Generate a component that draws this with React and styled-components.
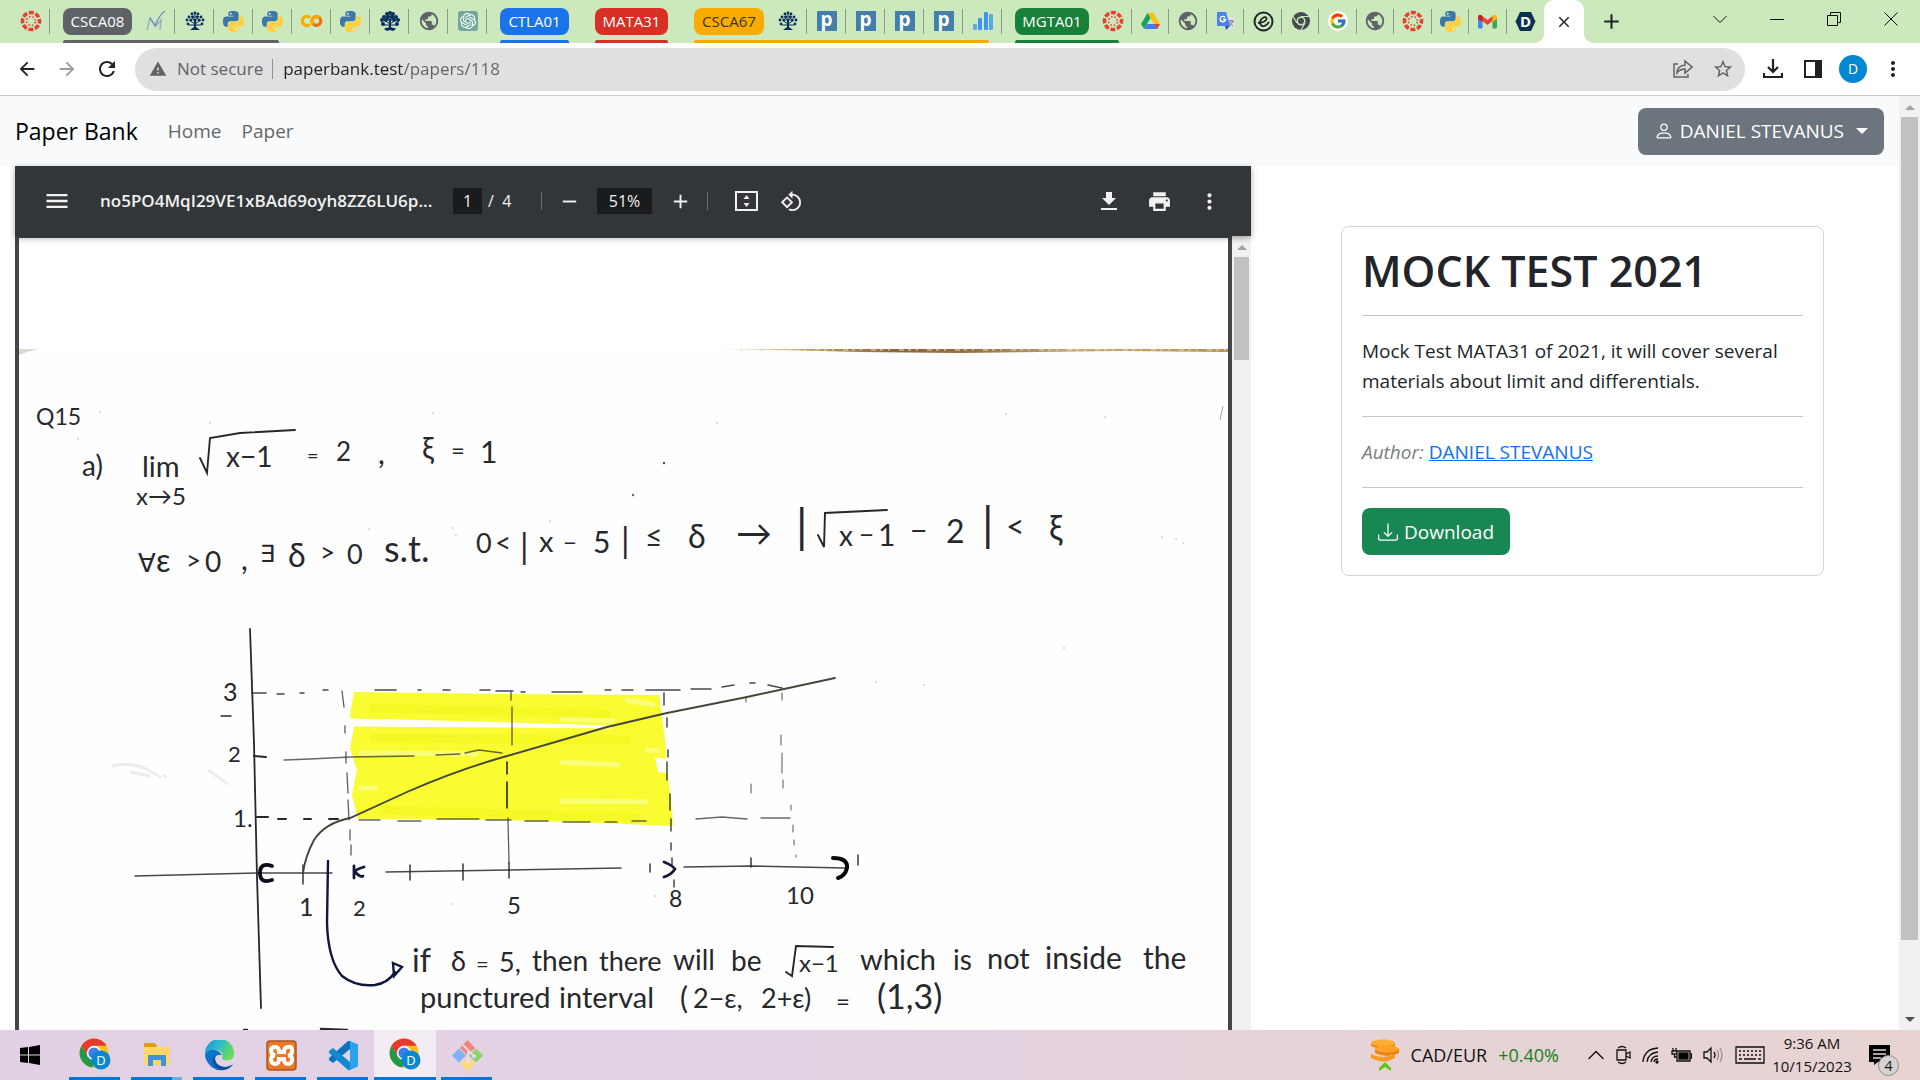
import React from "react";
import styled, { createGlobalStyle, css } from "styled-components";
import { BsPerson, BsDownload } from "react-icons/bs";
import { FcGoogle } from "react-icons/fc";
import { SiOpenai } from "react-icons/si";
import {
  MdArrowBack,
  MdArrowForward,
  MdRefresh,
  MdWarning,
  MdStarOutline,
  MdMenu,
  MdRemove,
  MdAdd,
  MdPrint,
  MdMoreVert,
  MdPublic,
  MdClose,
} from "react-icons/md";

const ink = "#26282c";

/* ---------- favicons ---------- */

const CanvasIcon = () => (
  <svg width="22" height="22" viewBox="0 0 22 22">
    <circle cx="11" cy="11" r="8.5" fill="none" stroke="#e8402f" strokeWidth="3.6" strokeDasharray="4.9 1.776" strokeDashoffset="2.4" />
    <circle cx="11" cy="11" r="4.4" fill="none" stroke="#e8402f" strokeWidth="1.6" strokeDasharray="1.5 1.956" strokeDashoffset="-1" />
  </svg>
);

const PythonIcon = () => (
  <svg width="21" height="21" viewBox="0 0 24 24">
    <path fill="#3b77a8" d="M14.25.18l.9.2.73.26.59.3.45.32.34.34.25.34.16.33.1.3.04.26.02.2-.01.13V8.5l-.05.63-.13.55-.21.46-.26.38-.3.31-.33.25-.35.19-.35.14-.33.1-.3.07-.26.04-.21.02H8.77l-.69.05-.59.14-.5.22-.41.27-.33.32-.27.35-.2.36-.15.37-.1.35-.07.32-.04.27-.02.21v3.06H3.17l-.21-.03-.28-.07-.32-.12-.35-.18-.36-.26-.36-.36-.35-.46-.32-.59-.28-.73-.21-.88-.14-1.05-.05-1.23.06-1.22.16-1.04.24-.87.32-.71.36-.57.4-.44.42-.33.42-.24.4-.16.36-.1.32-.05.24-.01h.16l.06.01h8.16v-.83H6.18l-.01-2.75-.02-.37.05-.34.11-.31.17-.28.25-.26.31-.23.38-.2.44-.18.51-.15.58-.12.64-.1.71-.06.77-.04.84-.02 1.27.05z" />
    <circle cx="8.9" cy="2.9" r="1" fill="#fff" />
    <path fill="#ffd140" d="M21.04 6.11l.28.06.32.12.35.18.36.27.36.35.35.47.32.59.28.73.21.88.14 1.04.05 1.23-.06 1.23-.16 1.04-.24.86-.32.71-.36.57-.4.45-.42.33-.42.24-.4.16-.36.09-.32.05-.24.02-.16-.01h-8.22v.82h5.84l.01 2.76.02.36-.05.34-.11.31-.17.29-.25.25-.31.24-.38.2-.44.17-.51.15-.58.13-.64.09-.71.07-.77.04-.84.01-1.27-.04-1.07-.14-.9-.2-.73-.25-.59-.3-.45-.33-.34-.34-.25-.34-.16-.33-.1-.3-.04-.25-.02-.2.01-.13v-5.34l.05-.64.13-.54.21-.46.26-.38.3-.32.33-.24.35-.2.35-.14.33-.1.3-.06.26-.04.21-.02.13-.01h5.84l.69-.05.59-.14.5-.21.41-.28.33-.32.27-.35.2-.36.15-.36.1-.35.07-.32.04-.28.02-.21V6.07h2.09l.14.01z" />
    <circle cx="15.5" cy="21.1" r="1" fill="#fff" />
  </svg>
);

const TreeIcon = ({ full }) => (
  <svg width="20" height="20" viewBox="0 0 20 20" fill="#0a2f5c">
    <path d="M9 8h2v8l4 3H5l4-3z" />
    <path d="M10 13L4 9M10 13l6-4M10 11L6 5M10 11l4-6M10 12V3M10 14H4M10 14h6" stroke="#0a2f5c" strokeWidth="1" fill="none" />
    {[[10, 2], [7, 3], [13, 3], [4, 6], [16, 6], [8, 6], [12, 6], [2, 9], [18, 9], [6, 9], [14, 9], [3, 13], [17, 13]].map(([x, y]) => (
      <circle key={`${x}-${y}`} cx={x} cy={y} r={full ? 2 : 1.4} />
    ))}
    {full && <path d="M4 18q2-2 5-1h2q3-1 5 1l-3 2-3-1-3 1z" />}
  </svg>
);

const PencilIcon = () => (
  <svg width="20" height="22" viewBox="0 0 20 22" fill="none">
    <path d="M1 20L4 8l6 8 5-6-1 10" stroke="#93aebf" strokeWidth="1.4" />
    <path d="M4 8l5 8Q13 5 19 1" stroke="#6d88c5" strokeWidth="1.2" />
  </svg>
);

const ColabIcon = () => (
  <svg width="22" height="20" viewBox="0 0 22 20" fill="none" strokeWidth="3.2">
    <path d="M9 6.6A4.6 4.6 0 1 0 9 13.4" stroke="#f9ab00" />
    <circle cx="15.4" cy="10" r="4.4" stroke="#e8710a" />
    <path d="M12.3 13.1A4.4 4.4 0 0 1 18.5 6.9" stroke="#f9ab00" />
  </svg>
);

const GptIcon = () => (
  <GptTile>
    <SiOpenai size={16} color="#fff" />
  </GptTile>
);

const BarsIcon = () => (
  <svg width="20" height="20" viewBox="0 0 20 20" fill="#3f93f2">
    <rect x="0" y="13" width="4" height="6" rx="1" opacity=".75" />
    <rect x="5" y="7" width="4" height="12" rx="1" />
    <rect x="11" y="1" width="4" height="18" rx="1" />
    <rect x="16" y="3" width="4" height="16" rx="1" opacity=".8" />
  </svg>
);

const DriveIcon = () => (
  <svg width="19" height="18" viewBox="0 0 19 18">
    <path d="M6.5 1h6L3.200 17 0 12z" fill="#19a45b" />
    <path d="M6.5 1h6L19 12h-6z" fill="#fbc116" />
    <path d="M6.2 12H19l-3 5H3.200z" fill="#3f7df0" />
    <path d="M13 12h6l-3 5z" fill="#e64335" />
    <path d="M9.5 6.500l3.200 5.500H6.200z" fill="#cae8bd" />
  </svg>
);

const TranslateIcon = () => (
  <svg width="20" height="20" viewBox="0 0 20 20">
    <rect x="9" y="6" width="10" height="12" rx="1" fill="#dfe1e4" />
    <path d="M12 10h6M15 9v1M17 10q-1 3-5 5M13 11q1 3 4 4" stroke="#6b7580" fill="none" />
    <path d="M1 1h9l4 14H2q-1 0-1-1z" fill="#4a83ee" />
    <path d="M9 15h5l-4 4z" fill="#2250b5" />
    <path d="M9 6.5A2.700 2.700 0 1 0 9.500 8.500H7" stroke="#fff" strokeWidth="1.4" fill="none" />
  </svg>
);

const SwirlIcon = () => (
  <svg width="21" height="21" viewBox="0 0 21 21" fill="none" stroke="#20252c">
    <circle cx="10.5" cy="10.5" r="9" strokeWidth="2" />
    <path d="M5 12q8-1 8.500-4.200Q13.500 5.500 11 6.200 7 8 7 12q1 4 4.500 2.800 3-1 4.500-4" strokeWidth="1.8" />
  </svg>
);

const ChromeDark = () => (
  <svg width="20" height="20" viewBox="0 0 20 20">
    <circle cx="10" cy="10" r="9" fill="#46494e" />
    <circle cx="10" cy="10" r="4.5" fill="#cae8bd" />
    <circle cx="10" cy="10" r="3" fill="#46494e" />
    <path d="M10 5.500h8.500M6 12L2 5.500M14 12l-4 7" stroke="#cae8bd" strokeWidth="1.2" />
  </svg>
);

const GmailIcon = () => (
  <svg width="19" height="15" viewBox="0 0 19 15">
    <path d="M0 3v10q0 1.500 1.500 1.500H4.500V5z" fill="#4285f4" />
    <path d="M19 3v10q0 1.500-1.500 1.500H14.500V5z" fill="#34a853" />
    <path d="M3 1l6.500 5L16 1l-1.500 6-5 4-5-4z" fill="#ea4335" />
    <path d="M14.500 2.200L16 1q3-1 3 2v2l-4.500 3z" fill="#fbbc04" />
    <path d="M0 3v2l4.500 3V2.200L3 1Q0 0 0 3z" fill="#c5221f" />
  </svg>
);

const HexIcon = () => (
  <svg width="21" height="21" viewBox="0 0 21 21">
    <path d="M5 1h11l4.500 9.500L16 20H5L.5 10.500z" fill="#0a3350" />
    <text x="10.5" y="16" fontSize="15" fontWeight="700" fontFamily="Open Sans, sans-serif" textAnchor="middle" fill="#fff">D</text>
  </svg>
);

const Globe = () => <MdPublic size={22} color="#5f6368" />;
const PIcon = () => <PTile>p</PTile>;
const GIcon = () => (
  <GDisc>
    <FcGoogle size={18} />
  </GDisc>
);

/* ---------- taskbar icons ---------- */

const ChromeIcon = () => (
  <svg width="32" height="34" viewBox="0 0 32 34">
    <circle cx="15" cy="15" r="14.5" fill="#fbc116" />
    <path d="M2.500 7.700A14.500 14.500 0 0 1 27.600 7.700H15L8.700 18.600z" fill="#e33b2e" />
    <path d="M2.500 7.700L8.700 18.600 15 22.200 13.500 29.400A14.500 14.500 0 0 1 2.500 7.700z" fill="#21994a" />
    <circle cx="15" cy="15" r="7.2" fill="#fff" />
    <circle cx="15" cy="15" r="5.6" fill="#3b7ded" />
    <circle cx="22" cy="22" r="9.5" fill="#0b86cf" />
    <text x="22" y="27" fontSize="13" fontFamily="Open Sans, sans-serif" textAnchor="middle" fill="#fff">D</text>
  </svg>
);

const FolderIcon = () => (
  <svg width="28" height="26" viewBox="0 0 28 26">
    <path d="M1 1h11l2 3v4H1z" fill="#dd9e14" />
    <path d="M1 5h26v18H1z" fill="#ffd768" />
    <path d="M5 24V13h18v11h-5v-6h-8v6z" fill="#3f93d8" />
  </svg>
);

const EdgeIcon = () => (
  <svg width="31" height="31" viewBox="0 0 32 32">
    <defs>
      <linearGradient id="edgeTop" x1="0" y1="0" x2="1" y2="0.4">
        <stop offset="0" stopColor="#1b8fd8" />
        <stop offset="0.5" stopColor="#2dbbcd" />
        <stop offset="1" stopColor="#66dd5a" />
      </linearGradient>
    </defs>
    <path d="M1 15A15 15 0 0 1 31 13q1 8-8 8-5 0-4-4 1-4-3-6-8-3-15 4z" fill="url(#edgeTop)" />
    <path d="M1 15q5-7 13-4 4 2 4 5-3-2-6 1-2 5 2 10 4 4 9 3-8 3-15-2Q1 22 1 15z" fill="#1173c8" />
    <path d="M12 16q-2 5 2 9 6 5 14 1l2-1q-5 7-13 6-8-3-8-10 1-4 3-5z" fill="#0c4f9c" />
  </svg>
);

const XamppIcon = () => (
  <svg width="31" height="31" viewBox="0 0 31 31">
    <rect x="1" y="1" width="29" height="29" rx="3" fill="#ee7723" stroke="#a85820" strokeWidth="1.5" />
    <path d="M9 7q-4 0-4 3.500T9 15.500q-4 0-4 4T9 24q4 0 4-5h5q0 5 4 5t4-4.500-4-4q4 0 4-5T22 7q-4 0-4 5h-5q0-5-4-5z" fill="none" stroke="#fff" strokeWidth="4" />
  </svg>
);

const CodeIcon = () => (
  <svg width="31" height="31" viewBox="0 0 31 31">
    <path d="M22 1v8L5 23l-4-3v-2L20 1z" fill="#0b72bd" />
    <path d="M22 30v-8L5 8 1 11v2l19 17z" fill="#1389d2" />
    <path d="M21 .5l9 4v22l-9 4q1-1 1-3v-24q0-2-1-3z" fill="#29a3ec" />
  </svg>
);

const GitIcon = () => (
  <svg width="31" height="31" viewBox="0 0 31 31">
    <path d="M15.500 0L8 8l7 7 8-7z" fill="#f0837c" />
    <path d="M7 8.500L0 15.500l7 7 7-7z" fill="#80b1f5" />
    <path d="M24 8.500l7 7-7 7-7-7z" fill="#8fd16c" />
    <path d="M15.500 17l7 7-7 7-7-7z" fill="#fbdc77" />
    <path d="M11 5l5 5v12M16 10l5 5" stroke="#e9dde8" strokeWidth="1.8" fill="none" />
    <circle cx="16" cy="22" r="2" fill="#e9dde8" />
    <circle cx="22" cy="16" r="2" fill="#e9dde8" />
  </svg>
);

const WindowsIcon = () => (
  <svg width="20" height="20" viewBox="0 0 20 20" fill="#000">
    <path d="M0 3l8-1v7.500H0zM9 2l11-2v9.500H9zM0 10.500h8V18l-8-1zM9 10.500h11V20L9 18z" />
  </svg>
);

const CoinsIcon = () => (
  <svg width="30" height="34" viewBox="0 0 30 34">
    <path d="M1 5v3q12 6 24 0V5z" fill="#ef8310" />
    <ellipse cx="13" cy="5" rx="12" ry="3.5" fill="#ffac33" />
    <path d="M5 11v4q12 6 24 0v-4z" fill="#ef8310" />
    <ellipse cx="17" cy="11" rx="12" ry="3.5" fill="#ffa126" />
    <path d="M1 16v4q12 7 24 0v-4q-12 6-24 0z" fill="#f99a22" />
    <path d="M9 33v-3l6-6 6 6v3l-6-4z" fill="#62c613" />
  </svg>
);

/* ---------- tab strip ---------- */

function Tab({ icon: Icon }) {
  return (
    <TabCell>
      <Icon />
    </TabCell>
  );
}

const firstCourse = { name: "CSCA08", width: 69, color: "#5f6368", short: true, icons: [PencilIcon, TreeIcon, PythonIcon, PythonIcon] };
const pinned = [ColabIcon, PythonIcon, () => <TreeIcon full />, Globe, GptIcon];
const courses = [
  { name: "CTLA01", width: 69, color: "#1a73e8", icons: [] },
  { name: "MATA31", width: 73, color: "#d93025", icons: [] },
  { name: "CSCA67", width: 70, color: "#faab00", dark: true, icons: [TreeIcon, PIcon, PIcon, PIcon, PIcon, BarsIcon] },
  { name: "MGTA01", width: 74, color: "#188038", icons: [CanvasIcon] },
];
const loose = [DriveIcon, Globe, TranslateIcon, SwirlIcon, ChromeDark, GIcon, Globe, CanvasIcon, PythonIcon, GmailIcon, HexIcon];

function Group({ data }) {
  return (
    <GroupBox $color={data.color} $closed={data.icons.length === 0}>
      <Pill $color={data.color} $width={data.width} $dark={data.dark}>
        {data.name}
      </Pill>
      {data.icons.map((icon, i) => (
        <Tab key={i} icon={icon} />
      ))}
    </GroupBox>
  );
}

function TabStrip() {
  return (
    <Strip>
      <FirstTab>
        <CanvasIcon />
      </FirstTab>
      <Group data={firstCourse} />
      {pinned.map((icon, i) => (
        <Tab key={i} icon={icon} />
      ))}
      {courses.map((g) => (
        <Group key={g.name} data={g} />
      ))}
      <LooseTabs>
        {loose.map((icon, i) => (
          <Tab key={i} icon={icon} />
        ))}
      </LooseTabs>
      <ActiveTab aria-label="Close tab">
        <MdClose size={18} />
      </ActiveTab>
      <NewTab aria-label="New tab">
        <MdAdd size={25} />
      </NewTab>
      <WindowButtons>
        <WinButton aria-label="Search tabs">
          <svg width="14" height="9" viewBox="0 0 14 9"><path d="M.5 1L7 7.500 13.500 1" /></svg>
        </WinButton>
        <WinButton aria-label="Minimize">
          <svg width="14" height="14" viewBox="0 0 14 14"><path d="M0 7.500h14" /></svg>
        </WinButton>
        <WinButton aria-label="Restore">
          <svg width="14" height="14" viewBox="0 0 14 14"><path d="M.5 3.500h10v10H.5zM3.500 3V.5h10v10H11" /></svg>
        </WinButton>
        <WinButton aria-label="Close">
          <svg width="14" height="14" viewBox="0 0 14 14"><path d="M.5.5l13 13M13.500.5l-13 13" /></svg>
        </WinButton>
      </WindowButtons>
    </Strip>
  );
}

function AddressBar() {
  return (
    <Toolbar>
      <ToolButton aria-label="Back"><MdArrowBack size={22} /></ToolButton>
      <ToolButton aria-label="Forward" $faded><MdArrowForward size={22} /></ToolButton>
      <ToolButton aria-label="Reload"><MdRefresh size={24} /></ToolButton>
      <Omnibox>
        <MdWarning size={18} color="#5f6368" />
        <Secure>Not secure</Secure>
        <UrlInput aria-label="Address" defaultValue="paperbank.test/papers/118" />
        <BoxButton aria-label="Share">
          <svg width="20" height="20" viewBox="0 0 20 20" fill="none" stroke="#5f6368" strokeWidth="1.5">
            <path d="M5 5H1v13h14v-3M12 2l7 6-7 6v-4q-5 0-8 4 0-7 8-8z" />
          </svg>
        </BoxButton>
        <BoxButton aria-label="Bookmark"><MdStarOutline size={22} /></BoxButton>
      </Omnibox>
      <ToolButton aria-label="Downloads">
        <svg width="20" height="20" viewBox="0 0 20 20" fill="none" stroke="#202124" strokeWidth="2.2">
          <path d="M10 0v13M5 8l5 5 5-5M1 14v4h18v-4" />
        </svg>
      </ToolButton>
      <ToolButton aria-label="Side panel">
        <svg width="18" height="18" viewBox="0 0 18 18"><path d="M0 0h18v18H0zM2 2v14h9V2z" fill="#202124" fillRule="evenodd" /></svg>
      </ToolButton>
      <Avatar aria-label="Profile">D</Avatar>
      <ToolButton aria-label="Menu"><MdMoreVert size={24} /></ToolButton>
    </Toolbar>
  );
}

/* ---------- scanned page ---------- */

// [text, x, baseline, size]
const notes = [
  ["Q15", 36, 425, 23], ["a)", 82, 476, 28], ["lim", 142, 477, 29], ["x→5", 136, 505, 24],
  ["x−1", 226, 467, 28], ["=", 307, 463, 20], ["2", 336, 461, 26], [",", 378, 464, 30],
  ["ξ", 422, 459, 30], ["=", 451, 459, 24], ["1", 480, 463, 30],
  ["∀", 138, 572, 26], ["ε", 156, 572, 32], [">", 186, 570, 26], ["0", 205, 572, 28], [",", 241, 570, 30],
  ["∃", 260, 562, 24], ["δ", 288, 567, 32], [">", 320, 562, 26], ["0", 347, 564, 27], ["s.t.", 384, 562, 36],
  ["0", 476, 553, 27], ["<", 495, 553, 28], ["|", 520, 559, 34], ["x", 539, 552, 29], ["−", 563, 551, 24],
  ["5", 593, 553, 30], ["|", 621, 553, 34], ["≤", 645, 547, 30], ["δ", 688, 548, 32], ["→", 736, 546, 36],
  ["|", 796, 543, 46], ["x", 839, 546, 28], ["−", 859, 544, 26], ["1", 878, 546, 30], ["−", 910, 541, 30],
  ["2", 946, 543, 32], ["|", 982, 541, 46], ["<", 1006, 538, 32], ["ξ", 1049, 540, 34],
  ["3", 223, 701, 25], ["2", 228, 762, 22], ["1.", 233, 827, 24],
  ["1", 299, 916, 25], ["2", 353, 916, 22], ["5", 507, 914, 24], ["8", 669, 907, 23], ["10", 786, 904, 24],
  ["if", 412, 972, 32], ["δ", 451, 971, 27], ["=", 476, 972, 22], ["5,", 499, 972, 27], ["then", 532, 971, 28],
  ["there", 599, 971, 27], ["will", 673, 970, 28], ["be", 731, 971, 28], ["x−1", 799, 972, 24],
  ["which", 860, 970, 29], ["is", 953, 970, 28], ["not", 987, 969, 29], ["inside", 1045, 969, 30], ["the", 1143, 969, 30],
  ["punctured", 420, 1008, 29], ["interval", 559, 1008, 29], ["(", 680, 1009, 30], ["2−ε,", 693, 1008, 27],
  ["2+ε)", 761, 1008, 27], ["=", 836, 1010, 24], ["(1,3)", 877, 1009, 34],
];

const specks = [
  [100, 412], [78, 439], [210, 423], [433, 413], [550, 521], [717, 423], [1105, 417], [1006, 414], [876, 682],
  [924, 685], [1064, 648], [452, 904], [655, 896], [1162, 537], [1176, 539], [1183, 543], [369, 529], [453, 528],
  [456, 535], [165, 776],
];

function ScannedPage() {
  return (
    <Scan viewBox="19 238 1209 792" preserveAspectRatio="xMinYMin meet" role="img" aria-label="Scanned solution sheet">
      <defs>
        <linearGradient id="edge" x1="0" x2="1" y1="0" y2="0">
          <stop offset="0" stopColor="#cbb58c" stopOpacity="0.2" />
          <stop offset="0.15" stopColor="#c8a56a" />
          <stop offset="0.35" stopColor="#8f6433" />
          <stop offset="0.5" stopColor="#97723e" />
          <stop offset="0.7" stopColor="#c9a878" />
          <stop offset="1" stopColor="#b8924f" />
        </linearGradient>
      </defs>
      <rect x="19" y="348" width="1209" height="682" fill="#fefefe" />
      <path d="M720 349L1228 349V352L1120 351 1040 352 960 353 860 352 780 350z" fill="url(#edge)" />
      <path d="M740 350h488" stroke="#e8d8b8" strokeWidth="1.5" strokeDasharray="3 5 2 9 5 4" opacity=".7" />
      <path d="M19 349h20l-12 3-8 3z" fill="#ddd8cf" />
      {specks.map(([x, y]) => (
        <circle key={`${x}-${y}`} cx={x} cy={y} r="1" fill="#d4d4d4" />
      ))}
      <circle cx="664" cy="463" r="1.2" fill="#444" />
      <circle cx="633" cy="495" r="1.2" fill="#666" />
      <path d="M112 766q20-4 34 3t14 9M208 770l20 14M130 772l20 4" stroke="#ececec" strokeWidth="3" fill="none" />
      <path d="M1220 420l3-14" stroke="#aaa" />

      {/* highlighter */}
      <path d="M354 692L500 694 659 695 662 718 665 740 667 770 671 800 673 826 600 823 500 820 358 819 352 795 357 770 350 748 354 728 350 715z" fill="#f8fc30" />
      <path d="M350 720L440 722 611 727 500 726 352 725z" fill="#fff" stroke="#fff" strokeWidth="3" />
      <path d="M358 753l120 1M560 762l60 3M560 801l88 1M645 750l15 1M625 700l30 5M358 788h20M560 719l55 2" stroke="#fbfe90" strokeWidth="5" opacity=".75" />
      <path d="M370 708l240 6M370 738l260 2M380 810l260 8" stroke="#eef312" strokeWidth="9" opacity=".3" />
      <path d="M655 757l12 2v14l-9-1z" fill="#fff" />

      <g fill="none" stroke={ink} strokeLinecap="round">
        {/* axes */}
        <path d="M250 629L254 743 257 877 261 1008" strokeWidth="1.8" />
        <path d="M135 876L257 873 332 873M386 872L509 870 621 868M684 867L751 866 845 868" strokeWidth="1.6" opacity=".85" />
        <path d="M303 865v19M410 865v15M463 864v16M509 863v15M751 858v9M650 864v8M858 855v10M221 716h10" strokeWidth="1.4" />
        {/* curve */}
        <path d="M303 873Q305 857 314 840 325 823 350 818L407 792Q457 770 507 756L607 727 667 713 747 697 835 678" strokeWidth="1.9" stroke="#45463a" />
        {/* guides */}
        <path d="M252 693h14M277 694h7M300 693h4M323 690h5M375 690h21M418 690h3M443 690h7M480 690h10M496 691h17M521 692h4M552 692h30M605 690h6M622 690h11M646 690h34M691 689h20M722 687l12-2M750 683h5M768 685l14 3" strokeWidth="1.5" opacity=".85" />
        <path d="M284 760l26-1 40-2 64-1M436 755l24-1M465 753l14-3 23 3" strokeWidth="1.3" opacity=".7" />
        <path d="M254 756l12 1M257 817h11M278 819h8M304 819h7M329 819h9" strokeWidth="2" />
        <path d="M359 820h21M398 821h23M437 819h42M486 820h25M525 821h23M563 822h27M605 822h12M632 821h14M696 819l26-2 25 2M761 818h29" strokeWidth="1.4" opacity=".7" />
        <path d="M342 691l2 16M345 726v7M346 752v11M347 773l1 20M348 800l1 20M350 830v10M351 845v10M511 692v8M512 707v38M508 818l1 45" strokeWidth="1.3" opacity=".75" />
        <path d="M507 762v12M507 782v26" strokeWidth="1.6" />
        <path d="M664 693v12M667 718v9M668 750v7M667 762v18M670 794v16M671 819v12M671 843v7M672 858v8M674 880v7" strokeWidth="1.5" opacity=".85" />
        <path d="M782 693v7M781 735v10M782 753v20M783 780v8M791 805v5M793 825v7M794 840v5M796 855v2M751 784v9M746 698v4" strokeWidth="1.2" opacity=".65" />
        {/* radicals */}
        <path d="M200 458L207 473 210 438 240 433 295 430M818 535L824 547 825 513 887 510M786 972L792 976 796 946 833 947" strokeWidth="1.9" />
        {/* interval ends */}
        <path d="M272 866Q260 862 260 873T272 880" strokeWidth="3.8" stroke="#0d0f18" />
        <path d="M354 866v12M364 867q-8 2-9 5 6 6 8 4" strokeWidth="2.8" stroke="#141838" />
        <path d="M664 862q8 3 11 7-4 6-11 8" strokeWidth="2.8" stroke="#141838" />
        <path d="M833 858Q848 858 847 868 845 876 838 878" strokeWidth="4" stroke="#050505" />
        {/* callout */}
        <path d="M328 861L327 923Q328 960 342 976 356 987 375 985 388 983 395 972M393 963l9 4-8 9z" strokeWidth="2.4" stroke="#12173f" />
        <path d="M244 1030h3M321 1029l26 1" strokeWidth="2.5" />
      </g>

      <g fill={ink} fontFamily="Lato, 'DejaVu Sans', sans-serif">
        {notes.map(([text, x, y, size]) => (
          <text key={`${x}-${y}`} x={x} y={y} fontSize={size}>
            {text}
          </text>
        ))}
      </g>
    </Scan>
  );
}

function PdfViewer() {
  return (
    <Viewer>
      <PdfBar>
        <PdfButton aria-label="Toggle sidebar"><MdMenu size={28} /></PdfButton>
        <FileName>no5PO4MqI29VE1xBAd69oyh8ZZ6LU6p...</FileName>
        <PageBox aria-label="Page number" defaultValue="1" />
        <PageTotal>/&nbsp; 4</PageTotal>
        <BarLine />
        <PdfButton aria-label="Zoom out"><MdRemove size={23} /></PdfButton>
        <ZoomBox aria-label="Zoom level" defaultValue="51%" />
        <PdfButton aria-label="Zoom in"><MdAdd size={23} /></PdfButton>
        <BarLine />
        <FitButton aria-label="Fit to page">
          <svg width="23" height="20" viewBox="0 0 23 20">
            <path d="M1 1h21v18H1z" fill="none" stroke="#f1f1f1" strokeWidth="2" />
            <path d="M11.500 4l3 4h-6zM11.500 16l3-4h-6z" fill="#f1f1f1" />
          </svg>
        </FitButton>
        <PdfButton aria-label="Rotate">
          <svg width="23" height="23" viewBox="0 0 24 24" fill="#f1f1f1">
            <path d="M7.340 6.410L.860 12.900l6.490 6.480 6.490-6.480-6.500-6.490zM3.690 12.900l3.660-3.660L11 12.900l-3.660 3.660-3.650-3.660zm15.670-6.260A8.950 8.950 0 0 0 13 4V.760L8.760 5 13 9.240V6c1.790 0 3.580.680 4.950 2.050a7.007 7.007 0 0 1 0 9.900 6.973 6.973 0 0 1-7.790 1.440l-1.490 1.490C10.020 21.620 11.510 22 13 22c2.300 0 4.610-.880 6.360-2.640a8.980 8.980 0 0 0 0-12.720z" />
          </svg>
        </PdfButton>
        <PdfActions>
          <PdfButton aria-label="Download file">
            <svg width="16" height="18" viewBox="0 0 16 18" fill="#f1f1f1">
              <path d="M5 0h6v6h4l-7 7-7-7h4zM0 16h16v2H0z" />
            </svg>
          </PdfButton>
          <PdfButton aria-label="Print"><MdPrint size={25} /></PdfButton>
          <PdfButton aria-label="More actions"><MdMoreVert size={25} /></PdfButton>
        </PdfActions>
      </PdfBar>
      <PdfBody>
        <PaperArea>
          <ScannedPage />
        </PaperArea>
        <Scroller $width={19}>
          <Arrow viewBox="0 0 10 6"><path d="M0 6l5-5 5 5z" fill="#a3a3a3" /></Arrow>
          <Thumb $grow={2} />
          <Rest $grow={13} />
        </Scroller>
      </PdfBody>
    </Viewer>
  );
}

function Details() {
  return (
    <Side>
      <Card>
        <Title>MOCK TEST 2021</Title>
        <Rule />
        <Description>Mock Test MATA31 of 2021, it will cover several materials about limit and differentials.</Description>
        <Rule />
        <Author>
          <em>Author:</em> <a href="#author">DANIEL STEVANUS</a>
        </Author>
        <Rule />
        <DownloadButton>
          <BsDownload size={20} />
          Download
        </DownloadButton>
      </Card>
    </Side>
  );
}

/* ---------- taskbar ---------- */

const apps = [
  { name: "Chrome", icon: ChromeIcon },
  { name: "Explorer", icon: FolderIcon, stacked: true },
  { name: "Edge", icon: EdgeIcon },
  { name: "XAMPP", icon: XamppIcon },
  { name: "Code", icon: CodeIcon },
  { name: "Chrome window", icon: ChromeIcon, active: true },
  { name: "Git", icon: GitIcon },
];

function Taskbar() {
  return (
    <Bar>
      <StartButton aria-label="Start">
        <WindowsIcon />
      </StartButton>
      {apps.map(({ name, icon: Icon, active, stacked }) => (
        <AppButton key={name} aria-label={name} $active={active} $stacked={stacked}>
          <Icon />
        </AppButton>
      ))}
      <Tray>
        <Ticker>
          <CoinsIcon />
          <span>CAD/EUR</span>
          <Gain>+0.40%</Gain>
        </Ticker>
        <TrayIcons>
          <svg width="16" height="10" viewBox="0 0 16 10"><path d="M.5 9L8 1.500 15.500 9" /></svg>
          <svg width="16" height="20" viewBox="0 0 16 20"><path d="M2 5h9v10H2zM11 9l4-2v6l-4-2M3 3q4-3 8 0M3 17q4 3 8 0" /></svg>
          <svg width="18" height="18" viewBox="0 0 18 18"><path d="M1 16Q2 3 16 2M5 16Q6 7 16 6M9 16q1-6 7-6M12 16q0-3 4-3" /><circle cx="15" cy="16" r="1" fill="#000" /></svg>
          <svg width="21" height="16" viewBox="0 0 21 16"><path d="M6 4h13v10H6zM19 7h1.500v4H19M1 4h5v3H1zM2 1v3M5 1v3M3.500 7v3H6" /><path d="M8 6h9v6H8z" fill="#000" /></svg>
          <svg width="21" height="18" viewBox="0 0 21 18"><path d="M1 6h3l4-4v14l-4-4H1zM11 6q2 3 0 6" /><path d="M14 4q3 5 0 10M17 2q4 7 0 14" opacity=".35" /></svg>
          <svg width="30" height="18" viewBox="0 0 30 18"><path d="M1 1h28v16H1z" /><path d="M4 5h22M4 9h22" strokeDasharray="2 2" /><path d="M4 13h3M9 13h12M23 13h3" /></svg>
        </TrayIcons>
        <Clock>
          <span>9:36 AM</span>
          <span>10/15/2023</span>
        </Clock>
        <Notify aria-label="Notifications">
          <svg width="21" height="20" viewBox="0 0 21 20"><path d="M0 0h21v17H9l-4 3v-3H0z" fill="#000" /><path d="M4 5h13M4 9h13M4 13h8" stroke="#e5d3d3" strokeWidth="1.5" /></svg>
          <Badge>4</Badge>
        </Notify>
      </Tray>
    </Bar>
  );
}

export default function App() {
  return (
    <>
      <GlobalStyle />
      <Screen>
        <TabStrip />
        <AddressBar />
        <Content>
          <Main>
            <Navbar>
              <Brand href="#home">Paper Bank</Brand>
              <NavLink href="#home">Home</NavLink>
              <NavLink href="#paper">Paper</NavLink>
              <UserButton>
                <BsPerson size={20} />
                DANIEL STEVANUS
                <Caret />
              </UserButton>
            </Navbar>
            <Columns>
              <PdfViewer />
              <Details />
            </Columns>
          </Main>
          <Scroller $width={21}>
            <Arrow viewBox="0 0 10 6"><path d="M0 6l5-5 5 5z" fill="#a3a3a3" /></Arrow>
            <Thumb $grow={12} />
            <Rest $grow={1} />
            <Arrow viewBox="0 0 10 6"><path d="M0 0l5 5 5-5z" fill="#505050" /></Arrow>
          </Scroller>
        </Content>
        <Taskbar />
      </Screen>
    </>
  );
}

const GlobalStyle = createGlobalStyle`
* {
  box-sizing: border-box;
}
body {
  margin: 0;
  color: #212529;
  font-family: "Open Sans", "Noto Sans", sans-serif;
  font-size: 19px;
  line-height: 30px;
  overflow: hidden;
}
button, input {
  font: inherit;
  color: inherit;
  border: 0;
  padding: 0;
  margin: 0;
  background: none;
}
svg {
  flex: none;
  display: block;
}
`;

const Screen = styled.div`
  display: flex;
  flex-direction: column;
  height: 100vh;
  background: #fff;
`;

const center = css`
  display: flex;
  align-items: center;
  justify-content: center;
`;

const Strip = styled.div`
  display: flex;
  height: 43px;
  flex: none;
  padding-right: 1px;
  background: #cbe9bd;
`;

const TabCell = styled.div`
  ${center}
  position: relative;
  width: 39px;
  height: 42px;
  flex: none;
  &::after {
    content: "";
    position: absolute;
    right: 0;
    top: 9px;
    width: 1px;
    height: 25px;
    background: #8b9b83;
  }
`;

const FirstTab = styled(TabCell)`
  margin-left: 11px;
`;

const GroupBox = styled.div`
  display: flex;
  position: relative;
  flex: none;
  padding: 0 ${(p) => (p.$closed ? 13 : 0)}px 0 13px;
  &::after {
    content: "";
    position: absolute;
    left: 13px;
    right: 13px;
    bottom: 0;
    height: 3px;
    border-radius: 2px 2px 0 0;
    background: ${(p) => p.$color};
  }
`;

const Pill = styled.div`
  ${center}
  width: ${(p) => p.$width}px;
  height: 27px;
  margin-top: 8px;
  border-radius: 8px;
  font-size: 15px;
  line-height: 20px;
  padding-bottom: 2px;
  background: ${(p) => p.$color};
  color: ${(p) => (p.$dark ? "#3c3518" : "#fff")};
  & + ${TabCell} {
    margin-left: 4px;
  }
`;

const LooseTabs = styled.div`
  display: flex;
  width: 412px;
  flex: none;
  ${TabCell} {
    flex: 1;
  }
  ${TabCell}:last-child::after {
    display: none;
  }
`;

const ActiveTab = styled.button`
  ${center}
  position: relative;
  width: 40px;
  height: 43px;
  border-radius: 10px 10px 0 0;
  background: #fff;
  &::before,
  &::after {
    content: "";
    position: absolute;
    bottom: 0;
    width: 10px;
    height: 10px;
  }
  &::before {
    left: -10px;
    background: radial-gradient(circle at 0 0, transparent 10px, #fff 10px);
  }
  &::after {
    right: -10px;
    background: radial-gradient(circle at 100% 0, transparent 10px, #fff 10px);
  }
`;

const NewTab = styled.button`
  ${center}
  width: 54px;
`;

const WindowButtons = styled.div`
  display: flex;
  margin-left: auto;
`;

const WinButton = styled.button`
  ${center}
  width: 57px;
  height: 38px;
  svg {
    fill: none;
    stroke: #111;
  }
`;

const PTile = styled.span`
  ${center}
  width: 20px;
  height: 20px;
  font-size: 19px;
  font-weight: 700;
  line-height: 16px;
  padding-bottom: 4px;
  color: #fff;
  background: #447fab;
`;

const GptTile = styled.span`
  ${center}
  width: 20px;
  height: 20px;
  border-radius: 3px;
  background: #75a99c;
`;

const GDisc = styled.span`
  ${center}
  width: 20px;
  height: 20px;
  border-radius: 50%;
  background: #fff;
`;

const Toolbar = styled.div`
  display: flex;
  align-items: center;
  height: 53px;
  flex: none;
  padding: 0 7px;
  border-bottom: 1px solid #c9cbcd;
`;

const ToolButton = styled.button`
  ${center}
  width: 40px;
  height: 40px;
  color: ${(p) => (p.$faded ? "#9b9b9b" : "#202124")};
`;

const Omnibox = styled.div`
  display: flex;
  align-items: center;
  flex: 1;
  height: 43px;
  margin: 0 8px;
  padding: 0 2px 0 14px;
  border-radius: 22px;
  background: #e0e0e0;
  font-size: 17px;
`;

const Secure = styled.span`
  margin-left: 10px;
  padding-right: 9px;
  line-height: 20px;
  color: #5f6368;
  border-right: 1px solid #8f9193;
`;

const UrlInput = styled.input`
  flex: 1;
  margin-left: 10px;
  outline: none;
  background: linear-gradient(90deg, #202124 120px, #5f6368 120px);
  -webkit-background-clip: text;
  background-clip: text;
  color: transparent;
`;

const BoxButton = styled(ToolButton)`
  color: #5f6368;
`;

const Avatar = styled.button`
  ${center}
  width: 28px;
  height: 28px;
  margin: 0 6px;
  border-radius: 50%;
  background: #0288d1;
  color: #fff;
  font-size: 14px;
`;

const Content = styled.div`
  display: flex;
  flex: 1;
  min-height: 0;
`;

const Main = styled.main`
  display: flex;
  flex-direction: column;
  flex: 1;
  min-width: 0;
`;

const Navbar = styled.nav`
  display: flex;
  align-items: center;
  height: 70px;
  flex: none;
  padding: 0 15px;
  background: #f8fafc;
`;

const Brand = styled.a`
  margin-right: 30px;
  font-size: 23px;
  color: #000;
  text-decoration: none;
`;

const NavLink = styled.a`
  margin-right: 20px;
  color: #666768;
  text-decoration: none;
`;

const UserButton = styled.button`
  display: flex;
  align-items: center;
  gap: 6px;
  height: 47px;
  margin-left: auto;
  padding: 0 16px;
  border-radius: 8px;
  background: #6c757d;
  color: #fff;
`;

const Caret = styled.span`
  margin-left: 6px;
  border: 6px solid transparent;
  border-top-color: #fff;
  border-bottom: 0;
`;

const Columns = styled.div`
  display: grid;
  grid-template-columns: 2fr 1fr;
  flex: 1;
  min-height: 0;
`;

const Viewer = styled.section`
  display: flex;
  flex-direction: column;
  min-height: 0;
  margin: 0 15px;
  background: #43474b;
`;

const PdfBar = styled.div`
  display: flex;
  align-items: center;
  height: 70px;
  flex: none;
  padding: 0 22px;
  z-index: 1;
  background: #323639;
  box-shadow: 0 2px 6px rgba(0, 0, 0, 0.35);
  color: #f1f1f1;
  font-size: 16px;
`;

const PdfButton = styled.button`
  ${center}
  width: 40px;
  height: 40px;
`;

const FitButton = styled(PdfButton)`
  margin-left: 11px;
  margin-right: 5px;
`;

const FileName = styled.span`
  width: 330px;
  margin: 0 23px;
  font-size: 17px;
  font-weight: 600;
  white-space: nowrap;
`;

const PageBox = styled.input`
  width: 29px;
  height: 26px;
  background: #191b1c;
  text-align: center;
`;

const PageTotal = styled.span`
  margin-left: 6px;
  width: 46px;
`;

const BarLine = styled.span`
  width: 1px;
  height: 18px;
  margin: 0 7px;
  background: #6a6e71;
`;

const ZoomBox = styled(PageBox)`
  width: 55px;
  margin: 0 8px;
`;

const PdfActions = styled.div`
  display: flex;
  gap: 10px;
  margin-left: auto;
`;

const PdfBody = styled.div`
  display: flex;
  flex: 1;
  min-height: 0;
`;

const PaperArea = styled.div`
  flex: 1;
  min-width: 0;
  overflow: hidden;
  margin: 2px 4px 0;
  background: #fff;
`;

const Scan = styled.svg`
  width: 100%;
`;

const Scroller = styled.div`
  display: flex;
  flex-direction: column;
  align-items: center;
  flex: none;
  width: ${(p) => p.$width}px;
  padding: 0 2px;
  background: #f1f1f1;
`;

const Arrow = styled.svg`
  width: 10px;
  height: 6px;
  margin: 8px 0 7px;
`;

const Thumb = styled.div`
  flex: ${(p) => p.$grow};
  align-self: stretch;
  background: #c1c1c1;
`;

const Rest = styled.div`
  flex: ${(p) => p.$grow};
`;

const Side = styled.aside`
  padding: 60px 75px;
`;

const Card = styled.div`
  padding: 20px;
  border: 1px solid #d3d4d5;
  border-radius: 8px;
`;

const Title = styled.h1`
  margin: 0;
  font-size: 43px;
  font-weight: 600;
  line-height: 48px;
  white-space: nowrap;
`;

const Rule = styled.hr`
  margin: 20px 0;
  border: 0;
  border-top: 1px solid #c7c8c9;
`;

const Description = styled.p`
  margin: 0;
`;

const Author = styled.div`
  em {
    color: #7b7d7f;
  }
  a {
    color: #0d6efd;
  }
`;

const DownloadButton = styled.button`
  display: flex;
  align-items: center;
  gap: 6px;
  height: 47px;
  padding: 0 16px;
  border-radius: 8px;
  background: #198754;
  color: #fff;
`;

const Bar = styled.footer`
  display: flex;
  height: 50px;
  flex: none;
  background: linear-gradient(90deg, #e2d1e5, #e3d3e3 45%, #e5d3d5 75%, #e8d3d2);
  color: #111;
`;

const StartButton = styled.button`
  ${center}
  width: 60px;
  margin-right: 4px;
`;

const AppButton = styled.button`
  ${center}
  position: relative;
  width: 62px;
  background: ${(p) => (p.$active ? "#f3ecf4" : "none")};
  &::after {
    content: "";
    position: absolute;
    left: ${(p) => (p.$active ? 0 : 5)}px;
    right: ${(p) => (p.$active ? 0 : 6)}px;
    bottom: 0;
    height: 3px;
    background: ${(p) => (p.$stacked ? "linear-gradient(90deg, #0078d7 80%, #67aee4 80%)" : "#0078d7")};
  }
`;

const Tray = styled.div`
  display: flex;
  align-items: center;
  margin-left: auto;
  font-size: 18px;
`;

const Ticker = styled.div`
  display: flex;
  align-items: center;
  gap: 11px;
  margin-right: 29px;
`;

const Gain = styled.span`
  color: #168021;
`;

const TrayIcons = styled.div`
  display: flex;
  align-items: center;
  gap: 11px;
  svg {
    fill: none;
    stroke: #111;
    stroke-width: 1.3;
  }
`;

const Clock = styled.time`
  display: flex;
  flex-direction: column;
  align-items: center;
  width: 94px;
  font-size: 15px;
  line-height: 23px;
`;

const Notify = styled.button`
  position: relative;
  width: 21px;
  margin: 0 30px 0 10px;
`;

const Badge = styled.span`
  ${center}
  position: absolute;
  left: 9px;
  top: 10px;
  width: 21px;
  height: 21px;
  border: 1px solid #8d8d8d;
  border-radius: 50%;
  background: #d6d2d2;
  font-size: 14px;
`;
